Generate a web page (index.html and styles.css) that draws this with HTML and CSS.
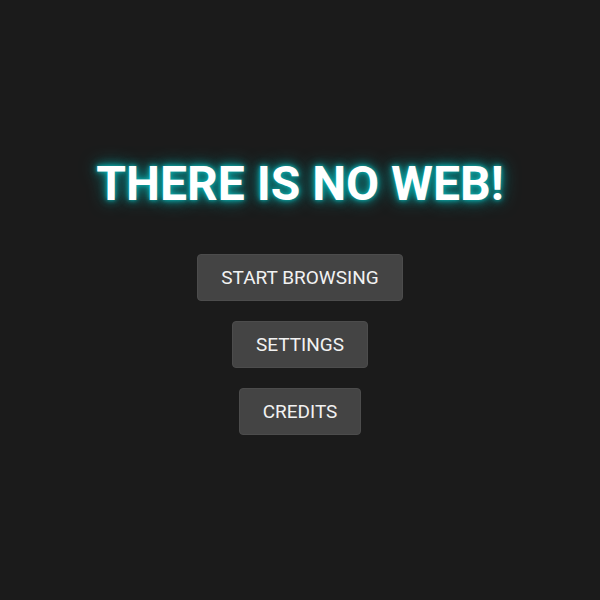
FILE: index.html
```html
<!DOCTYPE html>
<html>
<head>
<meta charset="utf-8">
<link rel="stylesheet" href="styles.css">
</head>
<body>
<main class="menu">
  <h1 class="title">THERE IS NO WEB!</h1>
  <div class="buttons">
    <button class="btn">START BROWSING</button>
    <button class="btn">SETTINGS</button>
    <button class="btn">CREDITS</button>
  </div>
</main>
</body>
</html>
```
FILE: styles.css
```css
html, body {
  margin: 0;
  padding: 0;
  height: 100%;
  background: #1b1b1b;
  font-family: Roboto, "Liberation Sans", sans-serif;
}
.menu {
  box-sizing: border-box;
  height: 100%;
  padding-bottom: 10px;
  display: flex;
  flex-direction: column;
  align-items: center;
  justify-content: center;
}
.title {
  margin: 0 0 41px 0;
  font-size: 48px;
  font-weight: 700;
  color: #ffffff;
  line-height: 1.2;
  text-shadow: 0 0 4px #0bb8b8, 0 0 10px #0aa0a0, 0 0 18px #088888;
}
.buttons {
  display: flex;
  flex-direction: column;
  align-items: center;
  gap: 20px;
}
.btn {
  font-family: Roboto, "Liberation Sans", sans-serif;
  font-size: 19px;
  color: #f2f2f2;
  background: #444444;
  border: 1px solid #4c4c4c;
  border-radius: 4px;
  padding: 12px 23px;
  line-height: 21px;
}
```
